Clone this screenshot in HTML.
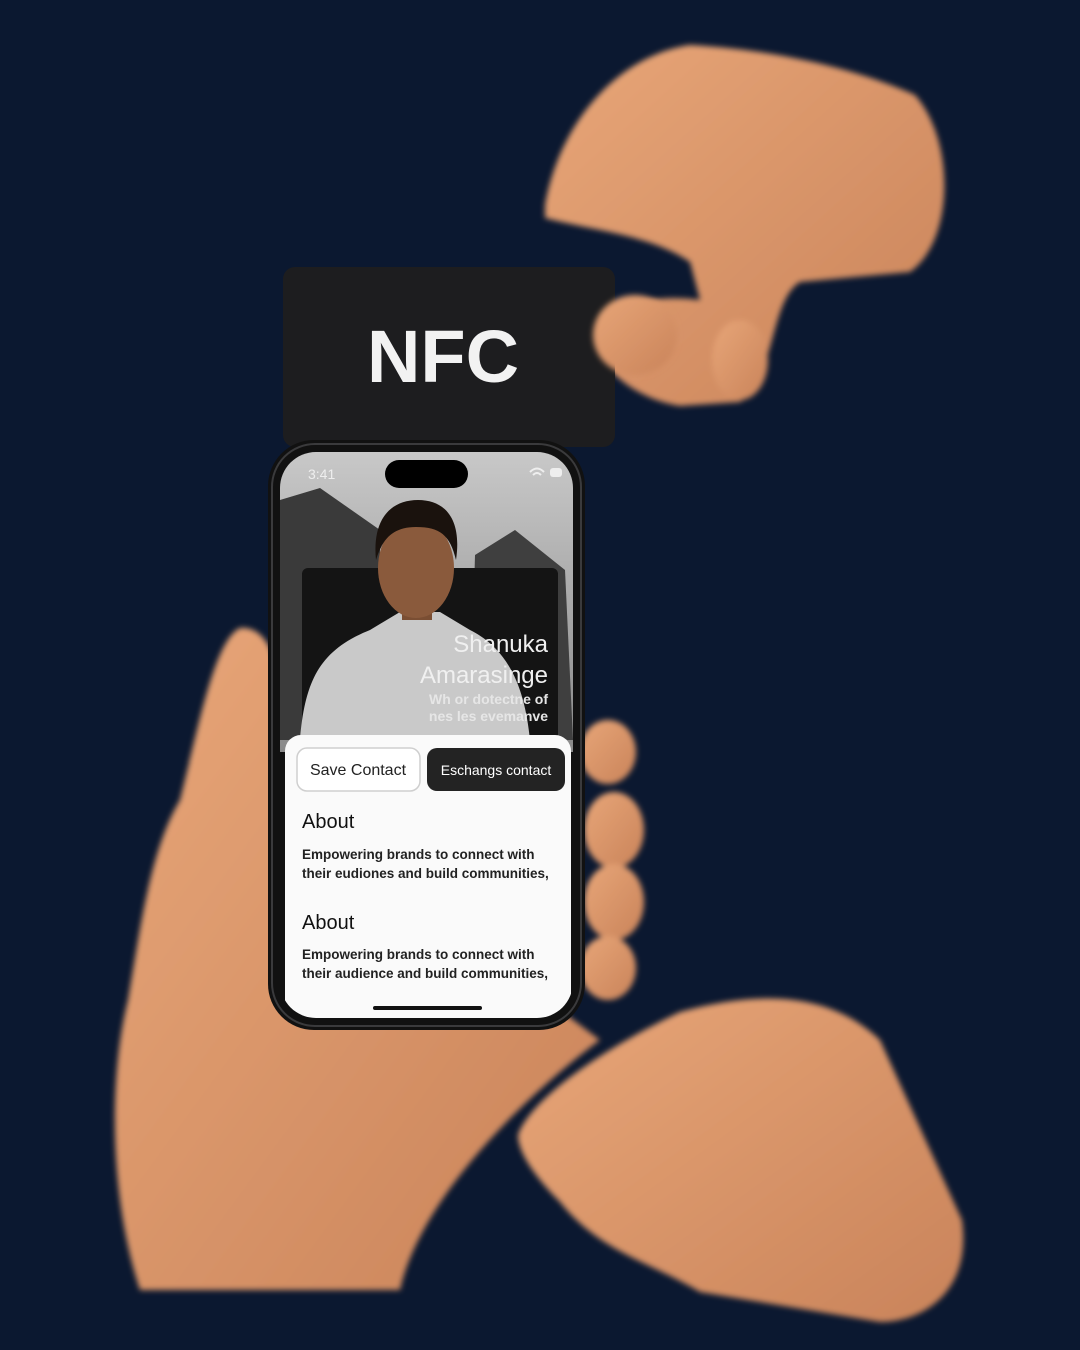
<!DOCTYPE html>
<html><head><meta charset="utf-8"><style>
html,body{margin:0;padding:0;background:#0b1830;}
svg{display:block}
</style></head><body>
<svg width="1080" height="1350" viewBox="0 0 1080 1350" xmlns="http://www.w3.org/2000/svg" font-family="Liberation Sans, sans-serif">
<defs>
<filter id="blur"><feGaussianBlur stdDeviation="3"/></filter>
<linearGradient id="skin" x1="0" y1="0" x2="1" y2="1"><stop offset="0" stop-color="#e8a678"/><stop offset="1" stop-color="#c9835a"/></linearGradient>
<linearGradient id="bg" x1="0" y1="0" x2="0" y2="1"><stop offset="0" stop-color="#c8c8c8"/><stop offset="1" stop-color="#8a8a8a"/></linearGradient>
</defs>
<rect width="1080" height="1350" fill="#0b1830"/>
<!-- top right hand -->
<g filter="url(#blur)" fill="url(#skin)">
<path d="M545 205 C560 120 620 55 690 45 C780 50 860 70 915 95 C955 140 955 240 910 272 L800 282 C770 300 775 380 740 402 L680 406 C640 400 600 372 598 342 C598 312 640 292 700 300 L690 262 C650 235 600 232 545 218 Z"/>
<ellipse cx="740" cy="360" rx="28" ry="40"/>
</g>
<!-- NFC card -->
<rect x="283" y="267" width="332" height="180" rx="12" fill="#1d1d1f"/>
<text x="443" y="382" text-anchor="middle" font-size="74" font-weight="bold" fill="#f2f2f2">NFC</text>
<g filter="url(#blur)" fill="url(#skin)">
<ellipse cx="635" cy="335" rx="42" ry="40"/>
</g>
<!-- left hand -->
<g filter="url(#blur)" fill="url(#skin)">
<path d="M240 628 C265 625 282 660 278 700 L278 1000 L560 1010 L600 1040 C520 1100 420 1200 400 1290 L140 1290 C110 1200 108 1080 128 1000 C140 930 150 850 180 800 C200 720 215 640 240 628 Z"/>
<ellipse cx="608" cy="752" rx="28" ry="32"/>
<ellipse cx="614" cy="830" rx="30" ry="38"/>
<ellipse cx="614" cy="902" rx="30" ry="38"/>
<ellipse cx="608" cy="968" rx="28" ry="32"/>
</g>
<!-- bottom right hand -->
<g filter="url(#blur)" fill="url(#skin)">
<path d="M518 1135 C530 1100 600 1050 680 1012 C760 990 830 992 880 1040 L962 1220 C972 1290 925 1322 880 1322 L700 1292 C650 1262 600 1252 560 1202 C540 1182 518 1155 518 1135 Z"/>
</g>
<!-- phone -->
<rect x="268" y="440" width="317" height="590" rx="46" fill="#111"/>
<rect x="272" y="444" width="309" height="582" rx="43" fill="none" stroke="#3a3a3c" stroke-width="2"/>
<clipPath id="scr"><rect x="280" y="452" width="293" height="566" rx="36"/></clipPath>
<g clip-path="url(#scr)">
<rect x="280" y="452" width="293" height="300" fill="url(#bg)"/>
<path d="M280 500 L320 488 L380 530 L380 740 L280 740 Z" fill="#3a3a3a"/>
<path d="M475 555 L515 530 L565 570 L573 740 L470 740 Z" fill="#3f3f3f"/>
<rect x="302" y="568" width="256" height="175" rx="6" fill="#141414"/>
<path d="M300 740 C305 680 320 650 370 630 L400 612 L440 612 L470 630 C510 650 525 690 530 740 Z" fill="#c9c9c9"/>
<rect x="402" y="590" width="30" height="30" fill="#7a4e33"/>
<ellipse cx="416" cy="568" rx="38" ry="50" fill="#8a5a3c"/>
<path d="M376 560 C372 520 390 500 418 500 C446 500 462 520 456 560 C450 535 440 527 416 527 C392 527 382 540 376 560 Z" fill="#1a120d"/>
<text x="548" y="652" text-anchor="end" font-size="24" fill="#f0f0f0">Shanuka</text>
<text x="548" y="683" text-anchor="end" font-size="24" fill="#f0f0f0">Amarasinge</text>
<text x="548" y="704" text-anchor="end" font-size="14" font-weight="bold" fill="#e6e6e6">Wh or dotectne of</text>
<text x="548" y="721" text-anchor="end" font-size="14" font-weight="bold" fill="#e6e6e6">nes les evemanve</text>
<text x="308" y="479" font-size="14" fill="#eee">3:41</text>
<rect x="385" y="460" width="83" height="28" rx="14" fill="#000"/>
<rect x="550" y="468" width="12" height="9" rx="3" fill="#eee"/>
<path d="M530 472 Q537 465 544 472 M533 475 Q537 471 541 475" stroke="#eee" stroke-width="2" fill="none"/>
<rect x="285" y="735" width="286" height="300" rx="16" fill="#fafafa"/>
<rect x="297" y="748" width="123" height="43" rx="10" fill="#fff" stroke="#cfcfcf" stroke-width="1.5"/>
<text x="358" y="775" text-anchor="middle" font-size="16" fill="#222">Save Contact</text>
<rect x="427" y="748" width="138" height="43" rx="10" fill="#232323"/>
<text x="496" y="775" text-anchor="middle" font-size="14" fill="#fff">Eschangs contact</text>
<text x="302" y="828" font-size="20" fill="#111">About</text>
<text x="302" y="859" font-size="13.5" font-weight="bold" fill="#222">Empowering brands to connect with</text>
<text x="302" y="878" font-size="13.5" font-weight="bold" fill="#222">their eudiones and build communities,</text>
<text x="302" y="929" font-size="20" fill="#111">About</text>
<text x="302" y="959" font-size="13.5" font-weight="bold" fill="#222">Empowering brands to connect with</text>
<text x="302" y="978" font-size="13.5" font-weight="bold" fill="#222">their audience and build communities,</text>
<rect x="373" y="1006" width="109" height="4" rx="2" fill="#111"/>
</g>
</svg>
</body></html>
